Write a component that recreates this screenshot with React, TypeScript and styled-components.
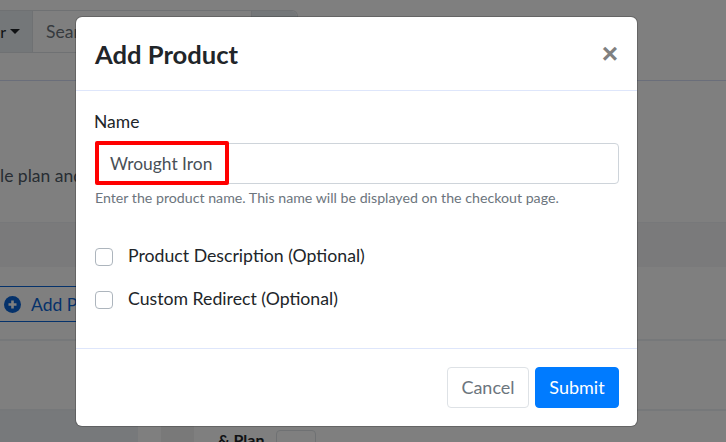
import React from 'react'
import styled, { createGlobalStyle } from 'styled-components'

const GlobalStyle = createGlobalStyle`
	html, body {
		margin: 0;
		padding: 0;
		background: #fff;
	}
	* {
		box-sizing: border-box;
	}
`

const Page = styled.div`
	position: relative;
	width: 726px;
	height: 442px;
	overflow: hidden;
	background: #fff;
	font-family: Lato, 'Open Sans', sans-serif;
	color: #212529;
`

const Backdrop = styled.div`
	position: absolute;
	inset: 0;
	background: rgba(0, 0, 0, 0.5);
`

const Toolbar = styled.div`
	display: flex;
	width: 298px;
	height: 43px;
	margin-top: 10px;
	border: 1px solid #dee2e6;
	border-left: 0;
	border-radius: 0 6px 0 0;
	font-size: 16px;
`

const FilterToggle = styled.div`
	display: flex;
	align-items: center;
	justify-content: flex-end;
	gap: 4px;
	width: 33px;
	padding-right: 12px;
	overflow: hidden;
	white-space: nowrap;
	background: #e9eef3;
	border-right: 1px solid #dee2e6;
`

const Caret = styled.span`
	flex: none;
	width: 0;
	height: 0;
	border-top: 5px solid #212529;
	border-left: 5px solid transparent;
	border-right: 5px solid transparent;
`

const SearchField = styled.div`
	flex: 1;
	display: flex;
	align-items: center;
	padding-left: 13px;
	color: #6c757d;
	font-size: 17.5px;
`

const SearchButton = styled.div`
	width: 46px;
	background: #e9eef3;
	border-left: 1px solid #dee2e6;
	border-radius: 0 6px 0 0;
`

const HeaderRule = styled.div`
	height: 28px;
	border-bottom: 1px solid #d5dcf5;
`

const Intro = styled.p`
	height: 141px;
	margin: 0;
	padding: 84px 0 0 0;
	color: #4f5b67;
	font-size: 17.5px;
	line-height: 22px;
	white-space: nowrap;
`

const Band = styled.div`
	height: 45px;
	background: #f4f5f7;
	border-top: 1px solid #eff1f4;
`

const ActionRow = styled.div`
	height: 74px;
	padding-top: 19px;
	border-bottom: 2px solid #edf0f4;
`

const AddButton = styled.div`
	display: flex;
	align-items: center;
	gap: 10px;
	width: 120px;
	height: 36px;
	padding-left: 4px;
	border-top: 1px solid #0a64d6;
	border-bottom: 1px solid #0a64d6;
	color: #0a64d6;
	font-size: 17.5px;
	white-space: nowrap;
`

const TableGap = styled.div`
	height: 70px;
	border-bottom: 2px solid #edf0f4;
`

const BottomRow = styled.div`
	display: grid;
	grid-template-columns: 138px 23px 33px 1fr;
	height: 30px;
`

const BottomCell = styled.div<{ $tone: string }>`
	background: ${(props) => props.$tone};
`

const PlanCell = styled.div`
	display: flex;
	align-items: flex-start;
	gap: 12px;
	padding: 19px 0 0 24px;
	font-size: 16px;
	font-weight: 700;
	line-height: 20px;
	white-space: nowrap;
`

const SmallButton = styled.div`
	width: 40px;
	height: 30px;
	border: 1px solid #dee2e6;
	border-radius: 4px;
`

const Modal = styled.div`
	position: absolute;
	left: 76px;
	top: 17px;
	display: flex;
	flex-direction: column;
	width: 561px;
	height: 409px;
	background: #fff;
	border-radius: 6px;
	box-shadow: 0 0 0 1px rgba(0, 0, 0, 0.2);
`

const ModalHeader = styled.div`
	display: flex;
	align-items: center;
	justify-content: space-between;
	height: 74px;
	padding: 0 19px;
	border-bottom: 1px solid #dee6fb;
`

const Title = styled.h5`
	margin: 0;
	font-size: 25.6px;
	font-weight: 700;
	line-height: 72px;
	color: #212529;
`

const CloseButton = styled.span`
	font-family: 'Liberation Sans', Arial, sans-serif;
	font-size: 28px;
	font-weight: 700;
	line-height: 1;
	color: #808080;
`

const ModalBody = styled.div`
	flex: 1;
	padding: 21px 18px 0 19px;
	border-bottom: 1px solid #dee6fb;
`

const FieldLabel = styled.label`
	display: block;
	height: 31px;
	margin-left: -1px;
	font-size: 17.5px;
	line-height: 20px;
	color: #212529;
`

const InputWrap = styled.div`
	position: relative;
`

const TextInput = styled.div`
	height: 41px;
	padding-left: 14px;
	border: 1px solid #ced4da;
	border-radius: 4px;
	font-size: 17.4px;
	line-height: 39px;
	color: #495057;
`

const Highlight = styled.div`
	position: absolute;
	left: 0;
	top: -2px;
	width: 134px;
	height: 44px;
	border: 4px solid #ff0000;
	border-radius: 2px;
`

const HelpText = styled.small`
	display: block;
	margin-top: 6px;
	font-size: 14.2px;
	line-height: 16px;
	color: #6c757d;
`

const CheckRow = styled.label<{ $top: number }>`
	display: flex;
	align-items: center;
	gap: 15px;
	height: 22px;
	margin-top: ${(props) => props.$top}px;
	font-size: 17.7px;
	color: #212529;
`

const CheckBox = styled.span`
	flex: none;
	width: 18px;
	height: 18px;
	margin-top: 3px;
	border: 1px solid #adb5bd;
	border-radius: 4px;
	background: #fff;
`

const ModalFooter = styled.div`
	display: flex;
	justify-content: flex-end;
	gap: 6px;
	height: 77px;
	padding: 18px 18px 0 0;
`

const FooterButton = styled.button<{ $primary?: boolean }>`
	height: 41px;
	padding: 0 0 2px;
	width: ${(props) => (props.$primary ? '84px' : '82px')};
	border: 1px solid ${(props) => (props.$primary ? '#007bff' : '#dee2e6')};
	border-radius: 4px;
	background: ${(props) => (props.$primary ? '#007bff' : '#fff')};
	color: ${(props) => (props.$primary ? '#fff' : '#6c757d')};
	font-family: Lato, 'Open Sans', sans-serif;
	font-size: 18px;
`

export default function App() {
	return (
		<>
			<GlobalStyle />
			<Page>
				<Toolbar>
					<FilterToggle>
						Filter
						<Caret />
					</FilterToggle>
					<SearchField>Search</SearchField>
					<SearchButton />
				</Toolbar>
				<HeaderRule />
				<Intro>le plan and continue</Intro>
				<Band />
				<ActionRow>
					<AddButton>
						<svg width="17" height="17" viewBox="0 0 17 17">
							<circle cx="8.5" cy="8.5" r="8.5" fill="#0a64d6" />
							<path d="M8.5 4.5v8M4.5 8.5h8" stroke="#fff" strokeWidth="2.6" />
						</svg>
						Add Plan
					</AddButton>
				</ActionRow>
				<TableGap />
				<BottomRow>
					<BottomCell $tone="#eef2f6" />
					<BottomCell $tone="#ffffff" />
					<BottomCell $tone="#f3f3f3" />
					<PlanCell>
						&amp; Plan
						<SmallButton />
					</PlanCell>
				</BottomRow>
				<Backdrop />
				<Modal>
					<ModalHeader>
						<Title>Add Product</Title>
						<CloseButton>×</CloseButton>
					</ModalHeader>
					<ModalBody>
						<FieldLabel>Name</FieldLabel>
						<InputWrap>
							<TextInput>Wrought Iron</TextInput>
							<Highlight />
						</InputWrap>
						<HelpText>Enter the product name. This name will be displayed on the checkout page.</HelpText>
						<CheckRow $top={38}>
							<CheckBox />
							Product Description (Optional)
						</CheckRow>
						<CheckRow $top={21}>
							<CheckBox />
							Custom Redirect (Optional)
						</CheckRow>
					</ModalBody>
					<ModalFooter>
						<FooterButton>Cancel</FooterButton>
						<FooterButton $primary>Submit</FooterButton>
					</ModalFooter>
				</Modal>
			</Page>
		</>
	)
}
